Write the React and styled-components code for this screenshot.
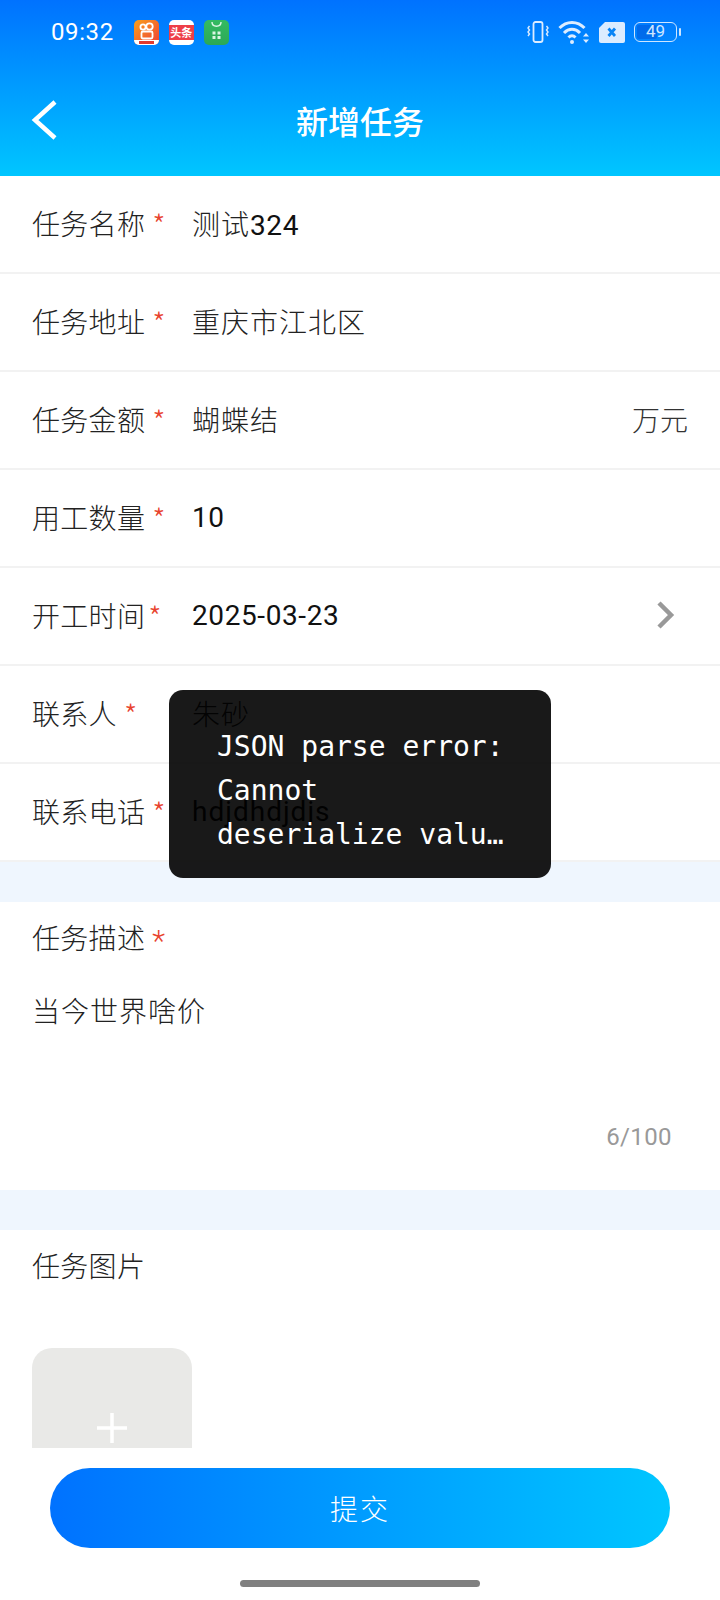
import React from "react";
import styled, { createGlobalStyle } from "styled-components";

const CJK = `"Noto Sans CJK SC", sans-serif`;

const Global = createGlobalStyle`
  html, body { margin: 0; padding: 0; background: #fff; }
  * { box-sizing: border-box; }
`;

const Page = styled.div`
  position: relative;
  width: 720px;
  height: 1600px;
  overflow: hidden;
  background: #fff;
  font-family: Roboto, ${CJK};
  color: #111;
  display: flex;
  flex-direction: column;
`;

const Header = styled.header`
  height: 176px;
  flex: none;
  background: linear-gradient(180deg, #0072ff 0%, #00c6ff 100%);
  color: #fff;
`;

const StatusBar = styled.div`
  height: 64px;
  display: flex;
  align-items: center;
  padding: 0 52px;
`;

const Time = styled.span`
  font-size: 24px;
  font-weight: 400;
  letter-spacing: 0.6px;
  margin-left: -1px;
  margin-right: 20px;
`;

const AppIcon = styled.span`
  width: 25px;
  height: 25px;
  border-radius: 5px;
  margin-right: 10px;
  background: ${(p) => p.$bg};
  display: flex;
  align-items: center;
  justify-content: center;
  overflow: hidden;
`;

const TinyLabel = styled.span`
  width: 100%;
  background: #ee3f48;
  color: #fff;
  font-family: ${CJK};
  font-size: 11px;
  font-weight: 700;
  line-height: 15px;
  text-align: center;
  white-space: nowrap;
`;

const StatusRight = styled.div`
  margin-left: auto;
  margin-right: -12px;
  display: flex;
  align-items: center;
  gap: 9px;
`;

const Battery = styled.span`
  width: 43px;
  height: 20px;
  margin-right: 3px;
  border: 1.5px solid #cfe6ff;
  border-radius: 6px;
  color: #cfe6ff;
  font-size: 17px;
  line-height: 17px;
  text-align: center;
  position: relative;
  &::before {
    content: "";
    position: absolute;
    left: 2px;
    top: 2px;
    bottom: 2px;
    width: 20px;
    border-radius: 2px;
    background: rgba(0, 80, 210, 0.45);
  }
  &::after {
    content: "";
    position: absolute;
    right: -5px;
    top: 5px;
    width: 2px;
    height: 8px;
    border-radius: 1px;
    background: #cfe6ff;
  }
`;

const BatteryText = styled.span`
  position: relative;
`;

const NavBar = styled.div`
  height: 112px;
  display: flex;
  align-items: center;
  padding: 0 32px;
`;

const BackIcon = styled.svg`
  flex: none;
  margin-left: -2px;
`;

const Title = styled.h1`
  margin: 0;
  flex: 1;
  text-align: center;
  font-size: 32px;
  font-weight: 500;
  font-family: ${CJK};
  padding-right: 26px;
`;

const Row = styled.div`
  height: 98px;
  flex: none;
  display: flex;
  align-items: center;
  padding: 0 32px 2px;
  border-bottom: 2px solid #f2f2f2;
  font-size: 28px;
  &:last-of-type {
    border-bottom: 0;
  }
`;

const Label = styled.span`
  width: 160px;
  flex: none;
  font-weight: 300;
  font-family: ${CJK};
  letter-spacing: 0.3px;
  color: #222;
`;

const Star = styled.span`
  color: #e8432e;
  font-size: 30px;
  line-height: 0;
  vertical-align: -2px;
  margin-left: ${(p) => p.$gap ?? 7}px;
`;

const Value = styled.span`
  flex: 1;
  font-weight: 400;
  letter-spacing: ${(p) => (p.$wide ? 1 : 0.6)}px;
`;

const Thin = styled.span`
  font-weight: 300;
  letter-spacing: 1px;
  color: #222;
`;

const Unit = styled.span`
  font-weight: 300;
  font-family: ${CJK};
  color: #333;
`;

const Chevron = styled.svg`
  flex: none;
  margin-right: 12px;
`;

const Spacer = styled.div`
  height: ${(p) => p.$h}px;
  flex: none;
  background: #eff6fe;
`;

const Section = styled.section`
  flex: none;
  padding: 16px 32px 0;
  height: ${(p) => p.$h}px;
`;

const SectionLabel = styled.div`
  font-size: 28px;
  font-weight: 300;
  line-height: 44px;
  letter-spacing: 0.3px;
  color: #222;
`;

const DescText = styled.div`
  margin-top: 29px;
  font-size: 28px;
  font-weight: 300;
  line-height: 44px;
  letter-spacing: 1px;
  color: #222;
`;

const Counter = styled.div`
  margin-top: 88px;
  text-align: right;
  padding-right: 16px;
  font-size: 24px;
  letter-spacing: 0.4px;
  color: #999;
`;

const Upload = styled.div`
  margin-top: 58px;
  width: 160px;
  height: 160px;
  border-radius: 20px;
  background: #e9e9e7;
  display: flex;
  align-items: center;
  justify-content: center;
`;

const BottomBar = styled.div`
  position: absolute;
  left: 0;
  right: 0;
  bottom: 0;
  height: 152px;
  background: #fff;
  display: flex;
  flex-direction: column;
  align-items: center;
  padding-top: 20px;
`;

const Submit = styled.button`
  width: 620px;
  height: 80px;
  border: 0;
  border-radius: 40px;
  color: #fff;
  font-size: 28px;
  font-weight: 300;
  font-family: ${CJK};
  letter-spacing: 2px;
  background: linear-gradient(90deg, #0072ff 0%, #00c6ff 100%);
`;

const HomeBar = styled.div`
  width: 240px;
  height: 7px;
  border-radius: 4px;
  background: #808080;
  margin-top: 32px;
`;

const Toast = styled.div`
  position: absolute;
  left: 169px;
  top: 690px;
  width: 382px;
  height: 188px;
  border-radius: 14px;
  background: rgba(0, 0, 0, 0.9);
  color: #fff;
  padding: 35px 48px 0;
  font-family: "DejaVu Sans Mono", monospace;
  font-size: 28px;
  line-height: 44px;
  white-space: nowrap;
`;

const fields = [
  { label: "任务名称", thin: "测试", value: "324" },
  { label: "任务地址", thin: "重庆市江北区" },
  { label: "任务金额", thin: "蝴蝶结", unit: "万元" },
  { label: "用工数量", value: "10" },
  { label: "开工时间", value: "2025-03-23", arrow: true, gap: 3 },
  { label: "联系人", thin: "朱砂" },
  { label: "联系电话", value: "hdjdhdjdjs", wide: true },
];

export default function App() {
  return (
    <Page>
      <Global />
      <Header>
        <StatusBar>
          <Time>09:32</Time>
          <AppIcon $bg="linear-gradient(135deg,#f9a01b,#ee3f3a)">
            <svg width="25" height="25" viewBox="0 0 25 25" fill="none">
              <circle cx="9" cy="7" r="2.600" stroke="#fff" strokeWidth="1.800" />
              <circle cx="15.500" cy="6.500" r="3.200" stroke="#fff" strokeWidth="1.800" />
              <rect x="7.500" y="11.500" width="11" height="7" rx="1.500" stroke="#fff" strokeWidth="1.800" />
              <rect x="0" y="20" width="25" height="5" fill="#fff" />
              <rect x="5" y="21" width="15" height="3" fill="#e2392f" />
            </svg>
          </AppIcon>
          <AppIcon $bg="#fff">
            <TinyLabel>头条</TinyLabel>
          </AppIcon>
          <AppIcon $bg="linear-gradient(180deg,#34bb62,#2ba855)">
            <svg width="25" height="25" viewBox="0 0 25 25" fill="none">
              <path d="M8 2c0 5.500 9 5.500 9 0" stroke="#d9f5e2" strokeWidth="1.500" />
              <path d="M8.500 11.500h3v3h-3zM13.500 11.500h3v3h-3zM8.500 16h3v3h-3zM13.500 16h3v3h-3z" fill="#d9f5e2" />
            </svg>
          </AppIcon>
          <StatusRight>
            <svg width="22" height="24" viewBox="0 0 22 24" fill="none" stroke="#dcecff" strokeWidth="1.800">
              <rect x="6.500" y="2" width="9" height="20" rx="2" />
              <path d="M2.500 6l-1.500 2 1.500 2-1.500 2 1.500 2-1.500 2M19.500 6l1.500 2-1.500 2 1.500 2-1.500 2 1.500 2" strokeWidth="1.400" />
            </svg>
            <svg width="32" height="26" viewBox="0 0 32 26" fill="none" stroke="#dcecff" strokeWidth="3">
              <path d="M1.500 9c7-7.500 18-7.500 25 0M6 14c4.800-5 11.200-5 16 0M10.500 18.500c2.200-2.400 4.800-2.400 7 0" />
              <circle cx="14" cy="23" r="2" fill="#dcecff" stroke="none" />
              <path d="M25 17.500h6l-3-3.500zM25 20.500h6l-3 3.500z" fill="#dcecff" stroke="none" />
            </svg>
            <svg width="26" height="21" viewBox="0 0 26 21">
              <path d="M6 0h18a2 2 0 0 1 2 2v17a2 2 0 0 1-2 2H2a2 2 0 0 1-2-2V6z" fill="#dcecff" />
              <path d="M9.500 6.500l6.500 7.500M16 6.500l-6.500 7.500" stroke="#0a84f5" strokeWidth="2.800" />
            </svg>
            <Battery>
              <BatteryText>49</BatteryText>
            </Battery>
          </StatusRight>
        </StatusBar>
        <NavBar>
          <BackIcon width="28" height="42" viewBox="0 0 28 42" fill="none" stroke="#fff" strokeWidth="4.500">
            <path d="M25 3L5 21l20 18" />
          </BackIcon>
          <Title>新增任务</Title>
        </NavBar>
      </Header>

      {fields.map((f) => (
        <Row key={f.label}>
          <Label>
            {f.label}
            <Star $gap={f.gap}>*</Star>
          </Label>
          <Value $wide={f.wide}>
            {f.thin && <Thin>{f.thin}</Thin>}
            {f.value}
          </Value>
          {f.unit && <Unit>{f.unit}</Unit>}
          {f.arrow && (
            <Chevron width="20" height="30" viewBox="0 0 20 30" fill="none" stroke="#999" strokeWidth="4.500">
              <path d="M3 3l12 12L3 27" />
            </Chevron>
          )}
        </Row>
      ))}

      <Spacer $h={40} />
      <Section $h={288}>
        <SectionLabel>
          任务描述<Star>*</Star>
        </SectionLabel>
        <DescText>当今世界啥价</DescText>
        <Counter>6/100</Counter>
      </Section>
      <Spacer $h={40} />
      <Section $h={300}>
        <SectionLabel>任务图片</SectionLabel>
        <Upload>
          <svg width="30" height="30" viewBox="0 0 30 30" stroke="#fff" strokeWidth="3.500">
            <path d="M15 0v30M0 15h30" />
          </svg>
        </Upload>
      </Section>

      <BottomBar>
        <Submit>提交</Submit>
        <HomeBar />
      </BottomBar>

      <Toast>
        JSON parse error:
        <br />
        Cannot
        <br />
        deserialize valu…
      </Toast>
    </Page>
  );
}
